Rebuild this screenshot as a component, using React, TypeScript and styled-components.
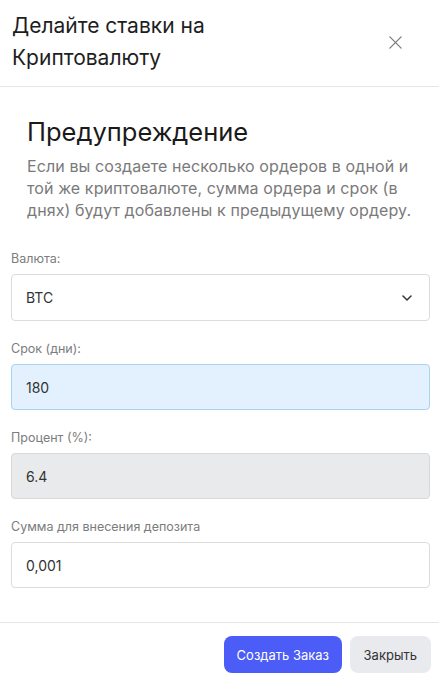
import styled, { createGlobalStyle } from 'styled-components';

const GlobalStyle = createGlobalStyle`
  body {
    margin: 0;
    background: #fff;
    font-family: Inter, "Noto Sans", sans-serif;
    color: #222;
  }
  * { box-sizing: border-box; }
`;

const fields = [
  { label: 'Срок (дни):', value: '180', variant: 'active' },
  { label: 'Процент (%):', value: '6.4', variant: 'disabled' },
  { label: 'Сумма для внесения депозита', value: '0,001', variant: 'plain' },
] as const;

const App = () => {
  return (
    <Modal>
      <GlobalStyle />
      <Header>
        <Title>Делайте ставки на Криптовалюту</Title>
        <CloseButton aria-label="close">
          <svg width="15" height="15" viewBox="0 0 16 16" fill="none" stroke="#7a7a7a" strokeWidth="1.4" strokeLinecap="round">
            <path d="M2 2 L14 14 M14 2 L2 14" />
          </svg>
        </CloseButton>
      </Header>

      <Body>
        <Warning>
          <WarningTitle>Предупреждение</WarningTitle>
          <WarningText>
            Если вы создаете несколько ордеров в одной и той же криптовалюте, сумма ордера и срок (в днях) будут добавлены к предыдущему ордеру.
          </WarningText>
        </Warning>

        <Field>
          <Label>Валюта:</Label>
          <SelectBox>
            <span>BTC</span>
            <svg width="10" height="6" viewBox="0 0 10 6" fill="none" stroke="#333" strokeWidth="1.5" strokeLinecap="round" strokeLinejoin="round">
              <path d="M1 1 L5 5 L9 1" />
            </svg>
          </SelectBox>
        </Field>

        {fields.map((f) => (
          <Field key={f.label}>
            <Label>{f.label}</Label>
            <InputBox $variant={f.variant}>{f.value}</InputBox>
          </Field>
        ))}
      </Body>

      <Footer>
        <PrimaryButton>Создать Заказ</PrimaryButton>
        <SecondaryButton>Закрыть</SecondaryButton>
      </Footer>
    </Modal>
  );
};

const Modal = styled.div`
  width: 439px;
  min-height: 681px;
  background: #fff;
  display: flex;
  flex-direction: column;
`;

const Header = styled.div`
  display: flex;
  align-items: center;
  justify-content: space-between;
  padding: 10px 32px 12px 12px;
  border-bottom: 1px solid #e6e6e6;
`;

const Title = styled.h2`
  margin: 0;
  max-width: 240px;
  font-size: 21px;
  font-weight: 400;
  line-height: 32px;
  color: #1e1e1e;
`;

const CloseButton = styled.button`
  border: none;
  background: none;
  padding: 4px;
  display: flex;
  cursor: pointer;
`;

const Body = styled.div`
  padding: 0 9px 34px 11px;
  display: flex;
  flex-direction: column;
  gap: 19px;
`;

const Warning = styled.div`
  padding: 30px 16px 10px 16px;
`;

const WarningTitle = styled.h3`
  margin: 0 0 8px;
  font-size: 25.5px;
  font-weight: 400;
  line-height: 30px;
  color: #1a1a1a;
`;

const WarningText = styled.p`
  margin: 0;
  font-size: 16px;
  letter-spacing: 0.1px;
  line-height: 22px;
  color: #7a7a7a;
`;

const Field = styled.div`
  display: flex;
  flex-direction: column;
  gap: 6px;
`;

const Label = styled.label`
  font-size: 12.5px;
  line-height: 18px;
  color: #7c7c7c;
`;

const SelectBox = styled.div`
  height: 47px;
  border: 1px solid #dcdcdc;
  border-radius: 4px;
  padding: 0 17px 0 14px;
  display: flex;
  align-items: center;
  justify-content: space-between;
  font-size: 14px;
  color: #333;
`;

const variants = {
  active: { bg: '#e2f1fd', border: '#a9d2f3' },
  disabled: { bg: '#e9eaec', border: '#d8d8d8' },
  plain: { bg: '#fff', border: '#dcdcdc' },
};

const InputBox = styled.div<{ $variant: keyof typeof variants }>`
  height: 46px;
  border: 1px solid ${(p) => variants[p.$variant].border};
  background: ${(p) => variants[p.$variant].bg};
  border-radius: 4px;
  padding: 0 14px;
  display: flex;
  align-items: center;
  font-size: 14px;
  color: #333;
`;

const Footer = styled.div`
  border-top: 1px solid #e6e6e6;
  padding: 13px 8px 8px;
  display: flex;
  justify-content: flex-end;
  gap: 8px;
`;

const BaseButton = styled.button`
  height: 37px;
  border: none;
  border-radius: 8px;
  font-family: Inter, "Noto Sans", sans-serif;
  font-size: 13px;
  cursor: pointer;
`;

const PrimaryButton = styled(BaseButton)`
  background: #4c5cf6;
  color: #fff;
  padding: 0 12.5px;
`;

const SecondaryButton = styled(BaseButton)`
  background: #e9eaee;
  color: #333;
  padding: 0 14px;
`;

export default App;
